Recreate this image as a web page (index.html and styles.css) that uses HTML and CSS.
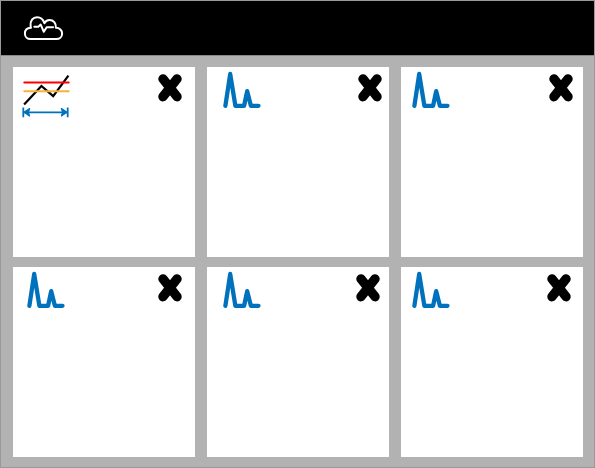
FILE: index.html
```html
<!DOCTYPE html>
<html lang="en">
<head>
<meta charset="utf-8">
<title>Dashboard</title>
<link rel="stylesheet" href="styles.css">
</head>
<body>
<svg class="symbols" aria-hidden="true">
  <symbol id="peaks" viewBox="0 0 38 38"><path class="peaks-line" d="M2.4 34.8 7.2 3l5.200 31.800h8.700l3.100-14.600 3.700 14.600h7.600"/></symbol>
  <symbol id="close" viewBox="0 0 24 28"><path class="close-line" d="M5 4.900 19 22.700M19 4.900 5 22.700"/></symbol>
</svg>
<div class="app">
  <header class="topbar">
    <svg class="logo" viewBox="0 0 42 28">
      <path d="M8.600 24.100h25.800c3.300 0 5.700-2.400 5.700-5.600 0-3.300-2.400-5.700-6.200-5.700.4-4.700-2.500-7.800-6.400-7.800-2.300 0-4.100 1.200-5.100 3.200-1.100-3.500-3.700-5.900-7.300-5.900-4.400 0-7 3.500-6.500 8.500.1.800.2 1.400.4 2-3.800.2-6.100 2.500-6.100 5.700s2.400 5.600 5.700 5.600z"/>
      <path d="M12.300 11.800h4l2.400-2.200 3.100 7.200 2.900-4.500h6.400"/>
    </svg>
  </header>
  <main class="grid">
    <section class="card card-trend">
      <svg class="trend" viewBox="0 0 50 46">
        <path class="trend-line" d="M3.100 33.500 20.400 15 32.200 25.200 47.400 4.700"/>
        <path class="limit" d="M3.300 11.500h44.400"/>
        <path class="warning" d="M3.300 20.200h44.400"/>
        <path class="range" d="M2.300 36.600v9.700M46.700 36.600v9.700M3 41.300h43"/>
        <path class="arrow" d="M8.600 37.600 3 41.300l5.600 3.700-1.200-3.700zM40.400 37.600 46 41.300l-5.600 3.700 1.200-3.700z"/>
      </svg>
      <svg class="close"><use href="#close"/></svg>
    </section>
    <section class="card card-b"><svg class="peaks"><use href="#peaks"/></svg><svg class="close"><use href="#close"/></svg></section>
    <section class="card card-c"><svg class="peaks"><use href="#peaks"/></svg><svg class="close"><use href="#close"/></svg></section>
    <section class="card card-d"><svg class="peaks"><use href="#peaks"/></svg><svg class="close"><use href="#close"/></svg></section>
    <section class="card card-e"><svg class="peaks"><use href="#peaks"/></svg><svg class="close"><use href="#close"/></svg></section>
    <section class="card card-f"><svg class="peaks"><use href="#peaks"/></svg><svg class="close"><use href="#close"/></svg></section>
  </main>
</div>
</body>
</html>
```
FILE: styles.css
```css
* { box-sizing: border-box; }
body { margin: 0; }
svg { display: block; fill: none; stroke-linecap: round; stroke-linejoin: round; }
.symbols { width: 0; height: 0; }
.app {
  width: 595px;
  height: 468px;
  border: 1px solid #999;
  background: #b2b2b2;
}
.topbar {
  height: 55px;
  padding: 14px 0 0 21px;
  background: #000;
  border-bottom: 1px solid #888;
}
.logo { width: 42px; height: 28px; stroke: #fff; stroke-width: 2; }
.grid {
  display: grid;
  grid-template-columns: repeat(3, 182px);
  grid-template-rows: repeat(2, 190px);
  gap: 10px 12px;
  padding: 11px 12px;
}
.card {
  display: flex;
  justify-content: space-between;
  align-items: flex-start;
  padding-top: 4px;
  background: #fff;
}
.card-trend { padding-left: 8px; padding-right: 12.7px; }
.card-b { padding-left: 15.9px; padding-right: 6.9px; }
.card-c { padding-left: 11.3px; padding-right: 9.6px; }
.card-d { padding-left: 13.9px; padding-right: 12.7px; }
.card-e { padding-left: 15.9px; padding-right: 8.8px; }
.card-f { padding-left: 11.3px; padding-right: 11.7px; }
.peaks { width: 38px; height: 38px; }
.peaks-line { stroke: #0071bc; stroke-width: 4.3; }
.close { width: 24px; height: 28px; margin-top: 2.7px; }
.close-line { stroke: #000; stroke-width: 9.4; }
.trend { width: 50px; height: 46px; overflow: visible; }
.trend-line { stroke: #000; stroke-width: 2.2; stroke-linecap: butt; stroke-linejoin: miter; }
.limit { stroke: #f00; stroke-width: 2; }
.warning { stroke: #fbb03b; stroke-width: 2; }
.range { stroke: #0071bc; stroke-width: 1.8; stroke-linecap: butt; }
.arrow { fill: #0071bc; stroke: #0071bc; stroke-width: 1.2; }
```
